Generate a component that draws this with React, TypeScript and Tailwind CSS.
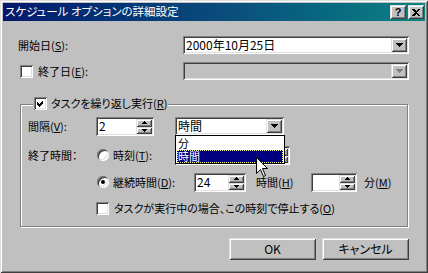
import React from 'react';

const sunken = 'shadow-[inset_1px_1px_#808080,inset_-1px_-1px_#fff,inset_2px_2px_#404040,inset_-2px_-2px_#dfdfdf]';
const raised = 'shadow-[inset_1px_1px_#dfdfdf,inset_-1px_-1px_#404040,inset_2px_2px_#fff,inset_-2px_-2px_#808080]';

function Arrow({ w = 7, h = 4, color = '#000' }: { w?: number; h?: number; color?: string }) {
  return (
    <svg width={w} height={h} viewBox={`0 0 ${w} ${h}`}>
      <path d={`M0 0H${w}L${w / 2} ${h}Z`} fill={color} shapeRendering="crispEdges" />
    </svg>
  );
}

function Combo({ w, text, disabled }: { w: string; text?: string; disabled?: boolean }) {
  return (
    <div className={`${w} h-[18px] ${disabled ? 'bg-[#c0c0c0]' : 'bg-white'} ${sunken} flex items-center justify-between pl-[3px] pr-[2px]`}>
      <span className="text-[12px]">{text}</span>
      <div className={`w-[16px] h-[14px] bg-[#c0c0c0] ${raised} flex items-center justify-center`}>
        {disabled ? <Arrow color="#808080" /> : <Arrow />}
      </div>
    </div>
  );
}

function Spin({ w, text }: { w: string; text?: string }) {
  return (
    <div className={`${w} h-[19px] bg-white ${sunken} flex items-center justify-between pl-[3px] pr-[2px]`}>
      <span className="text-[12px]">{text}</span>
      <div className="flex flex-col">
        <div className={`w-[16px] h-[8px] bg-[#c0c0c0] ${raised} flex items-center justify-center`}>
          <svg width="5" height="3" viewBox="0 0 5 3"><path d="M2.5 0L5 3H0Z" fill="#000" shapeRendering="crispEdges" /></svg>
        </div>
        <div className={`w-[16px] h-[7px] bg-[#c0c0c0] ${raised} flex items-center justify-center`}>
          <Arrow w={5} h={3} />
        </div>
      </div>
    </div>
  );
}

function Check({ checked }: { checked?: boolean }) {
  return (
    <div className={`w-[13px] h-[13px] bg-white ${sunken} flex items-center justify-center shrink-0`}>
      {checked && (
        <svg width="7" height="7" viewBox="0 0 7 7">
          <path d="M0 2L2 4L6 0V3L2 7L0 5Z" fill="#000" shapeRendering="crispEdges" />
        </svg>
      )}
    </div>
  );
}

function Radio({ checked }: { checked?: boolean }) {
  return (
    <div className={`w-[12px] h-[12px] rounded-full bg-white ${sunken} flex items-center justify-center shrink-0`}>
      {checked && <div className="w-[4px] h-[4px] rounded-full bg-black" />}
    </div>
  );
}

function Btn({ children }: { children: React.ReactNode }) {
  return (
    <div className={`w-[87px] h-[22px] bg-[#c0c0c0] ${raised} flex items-center justify-center text-[12px]`}>{children}</div>
  );
}

export default function App() {
  return (
    <div className="relative w-[428px] h-[273px] bg-[#c0c0c0] p-[3px] text-black text-[11px] leading-none font-['Noto_Sans_CJK_JP','Liberation_Sans',sans-serif] [font-feature-settings:'palt'] shadow-[inset_1px_1px_#dfdfdf,inset_-1px_-1px_#404040,inset_2px_2px_#fff,inset_-2px_-2px_#808080] flex flex-col overflow-hidden">
      <div className="h-[18px] shrink-0 bg-gradient-to-r from-[#06166c] via-[#0b4a7c] to-[#0e8282] flex items-center justify-between pl-[2px] pr-[1px]">
        <span className="text-white text-[11.5px]">スケジュール オプションの詳細設定</span>
        <div className="flex gap-[2px]">
          <div className={`w-[16px] h-[14px] bg-[#c0c0c0] ${raised} flex items-center justify-center font-['Liberation_Sans',sans-serif] font-bold text-[11px]`}>?</div>
          <div className={`w-[16px] h-[14px] bg-[#c0c0c0] ${raised} flex items-center justify-center`}>
            <svg width="8" height="7" viewBox="0 0 8 7">
              <path d="M0 0H2L4 2L6 0H8L5 3.5L8 7H6L4 5L2 7H0L3 3.5Z" fill="#000" shapeRendering="crispEdges" />
            </svg>
          </div>
        </div>
      </div>

      <div className="mt-[15px] h-[18px] flex items-center pl-[15px]">
        <span className="w-[165px]">開始日(<span className="underline">S</span>):</span>
        <Combo w="w-[226px]" text="2000年10月25日" />
      </div>

      <div className="mt-[8px] h-[18px] flex items-center pl-[17px]">
        <div className="w-[163px] flex items-center gap-[5px]">
          <Check />
          <span>終了日(<span className="underline">E</span>):</span>
        </div>
        <Combo w="w-[226px]" disabled />
      </div>

      <div className="relative mt-[24px] ml-[17px] w-[388px] h-[123px] border border-[#808080] shadow-[inset_1px_1px_#fff,1px_1px_#fff]">
        <div className="absolute left-[12px] top-[-8px] bg-[#c0c0c0] px-[1px] flex items-center gap-[4px]">
          <Check checked />
          <span>タスクを繰り返し実行(<span className="underline">R</span>)</span>
        </div>

        <div className="mt-[12px] h-[18px] flex items-center pl-[7px]">
          <span className="w-[68px]">間隔(<span className="underline">V</span>):</span>
          <Spin w="w-[58px]" text="2" />
          <div className="relative ml-[21px]">
            <Combo w="w-[109px]" text="時間" />
            <div className="absolute z-10 left-0 top-[18px] w-[110px] h-[29px] bg-white border border-black px-[1px] pt-[1px] flex flex-col text-[11px]">
              <div className="h-[13px] shrink-0 flex items-center pl-[1px]">
                <span className="leading-[11px]">分</span>
              </div>
              <div className="h-[13px] shrink-0 flex items-center pl-[1px] bg-[#000080] text-white outline outline-1 outline-dotted outline-[#ffff80] -outline-offset-1">
                <span className="leading-[11px]">時間</span>
              </div>
            </div>
          </div>
        </div>

        <div className="mt-[11px] h-[18px] flex items-center pl-[7px]">
          <span className="w-[69px]">終了時間：</span>
          <div className="w-[78px] flex items-center gap-[4px]">
            <Radio />
            <span>時刻(<span className="underline">T</span>):</span>
          </div>
          <Spin w="w-[115px]" />
        </div>

        <div className="mt-[9px] h-[18px] flex items-center pl-[7px]">
          <span className="w-[69px]" />
          <div className="w-[97px] flex items-center gap-[4px]">
            <Radio checked />
            <span>継続時間(<span className="underline">D</span>):</span>
          </div>
          <Spin w="w-[52px]" text="24" />
          <span className="ml-[10px] w-[55px]">時間(<span className="underline">H</span>)</span>
          <Spin w="w-[46px]" />
          <span className="ml-[7px]">分(<span className="underline">M</span>)</span>
        </div>

        <div className="mt-[8px] h-[18px] flex items-center pl-[75px] gap-[5px]">
          <Check />
          <span>タスクが実行中の場合、この時刻で停止する(<span className="underline">O</span>)</span>
        </div>
      </div>

      <div className="mt-[11px] ml-[226px] flex gap-[6px]">
        <Btn>OK</Btn>
        <Btn>キャンセル</Btn>
      </div>

      <svg className="absolute left-[256px] top-[157px] z-20" width="12" height="20" viewBox="0 0 12 20">
        <path d="M0.5 0.5V16.5L4.5 12.5L7.5 19.5L9.5 18.5L6.5 11.5H11.5Z" fill="#fff" stroke="#000" strokeWidth="1" />
      </svg>
    </div>
  );
}
